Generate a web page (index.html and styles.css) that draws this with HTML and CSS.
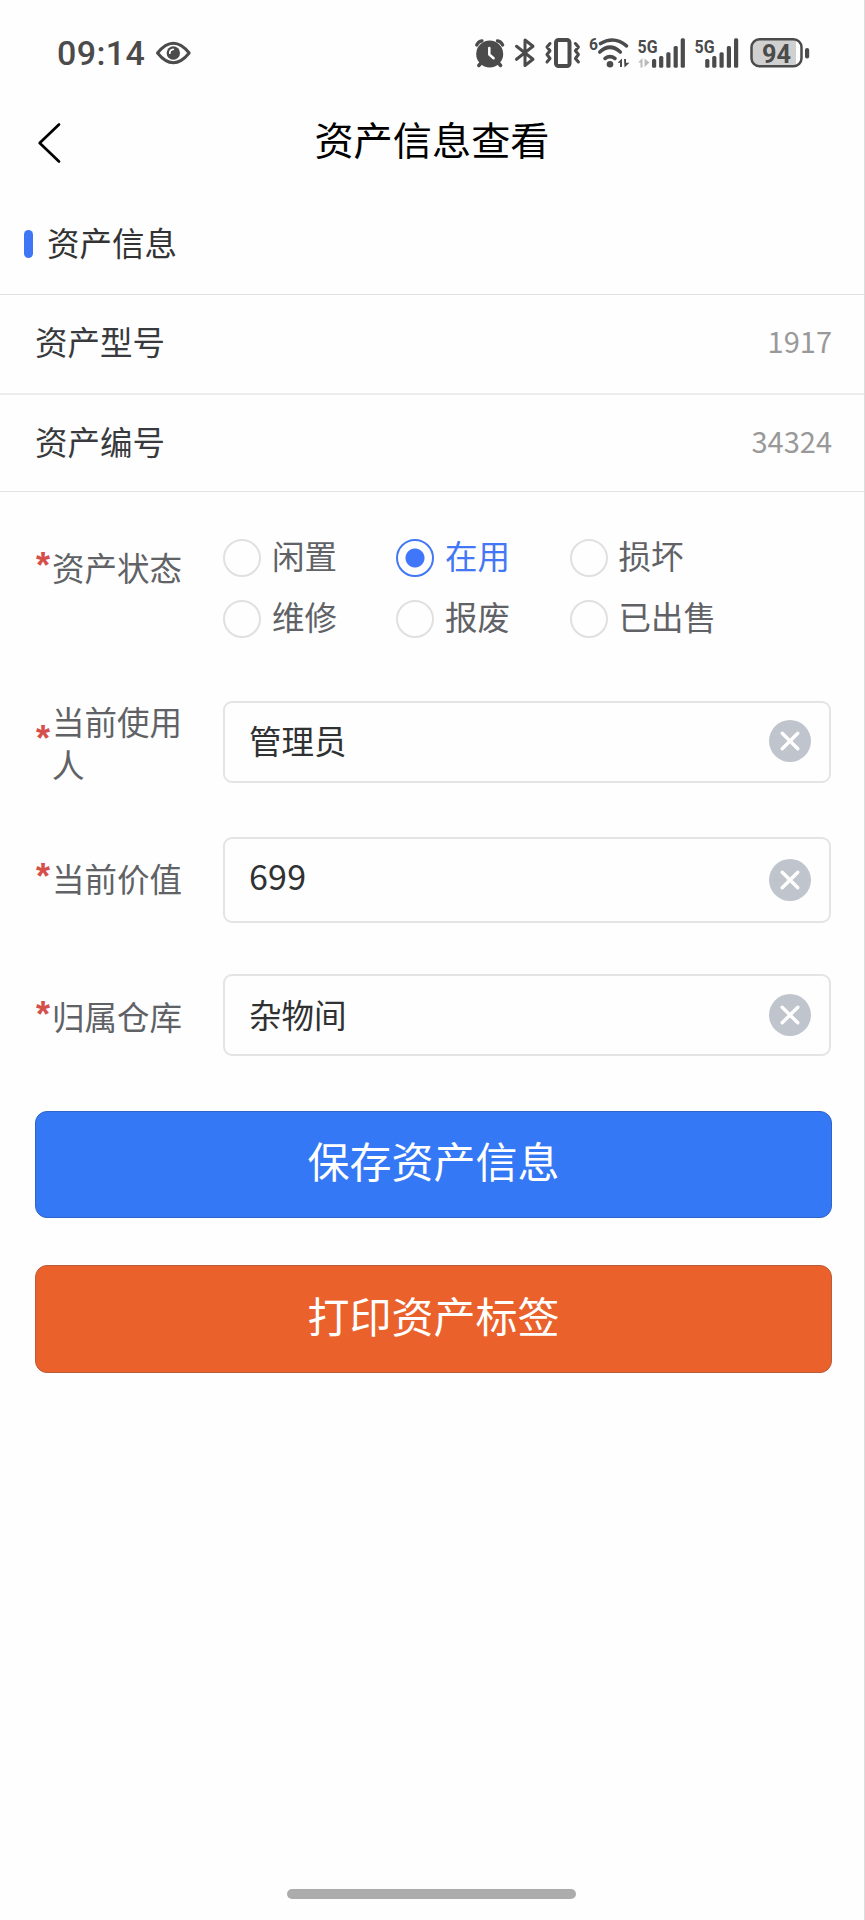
FILE: index.html
```html
<!DOCTYPE html>
<html lang="zh-CN">
<head>
<meta charset="utf-8">
<title>资产信息查看</title>
<link rel="stylesheet" href="styles.css">
</head>
<body>
<div class="screen">
  <header class="status">
    <span class="time">09:14</span>
    <svg class="eye" viewBox="155 40 37 26" width="37" height="26"><path d="M157.500 53Q173.300 33.500 189.200 53Q173.300 72.500 157.500 53Z" fill="none" stroke="#4b4b4b" stroke-width="3" stroke-linejoin="round"/><circle cx="173.300" cy="53" r="6.700" fill="#4b4b4b"/><path d="M169.800 53.200Q169.800 49.500 173.300 49.300" fill="none" stroke="#fff" stroke-width="1.700" stroke-linecap="round"/></svg>
    <div class="icons">
      <svg viewBox="470 25 40 60" width="40" height="60"><circle cx="489.700" cy="54" r="13.500" fill="#4b4b4b"/><g fill="none" stroke="#4b4b4b" stroke-linecap="round"><path d="M476.700 45Q478.300 41.300 482 40.800M502.700 45Q501.100 41.300 497.400 40.800" stroke-width="3.200"/><path d="M481.500 62.500L478.800 65.500M497.900 62.500L500.600 65.500" stroke-width="3.500"/></g><path d="M489.300 48V54.500L493.600 58.300" fill="none" stroke="#fff" stroke-width="2.500" stroke-linecap="round" stroke-linejoin="round"/></svg>
      <svg viewBox="510 25 30 60" width="30" height="60"><path d="M516.500 46.300L533 59.300L525 65.500V40L533 46.300L516.500 59.300" fill="none" stroke="#4b4b4b" stroke-width="3" stroke-linecap="round" stroke-linejoin="round"/></svg>
      <svg viewBox="540 25 45 60" width="45" height="60"><g fill="none" stroke="#4b4b4b" stroke-linecap="round" stroke-linejoin="round"><rect x="556" y="40" width="13.500" height="26" rx="2.500" stroke-width="4"/><path d="M550 43.500L547 47L550 50.700L547 54.500L550 58.500L547 62M575.400 43.500L578.400 47L575.400 50.700L578.400 54.500L575.400 58.500L578.400 62" stroke-width="3"/></g></svg>
      <svg viewBox="585 25 50 60" width="50" height="60"><text x="589" y="50" class="tag" font-size="17" textLength="9" lengthAdjust="spacingAndGlyphs">6</text><g fill="none" stroke="#4b4b4b" stroke-width="3.600" stroke-linecap="round"><path d="M600.500 43.500Q614 35.500 626.500 45.800"/><path d="M599.800 52Q610 42.500 620.300 52"/><path d="M605 58.500Q610 54.800 615 58.500"/></g><circle cx="610" cy="64.200" r="3.300" fill="#4b4b4b"/><path d="M617.500 62.800L622 58.500V67H620V62.800ZM624 59H626V62.800H629.500L624.500 67.500Z" fill="#4b4b4b"/></svg>
      <svg viewBox="635 25 55 60" width="55" height="60"><text x="637.500" y="52.500" class="tag" font-size="19" textLength="20" lengthAdjust="spacingAndGlyphs">5G</text><path d="M638 62.500L642.500 58V67.500H640.500V62.500ZM644.500 58.500L649.500 62.500L644.500 67Z" fill="#bbb"/><g fill="#4b4b4b"><rect x="652" y="59" width="4.200" height="8.700" rx="1.500"/><rect x="659.100" y="56" width="4.200" height="11.700" rx="1.500"/><rect x="666.300" y="52.300" width="4.200" height="15.400" rx="1.500"/><rect x="673.600" y="46" width="4.200" height="21.700" rx="1.500"/><rect x="680.700" y="38.300" width="4.200" height="29.400" rx="1.500"/></g></svg>
      <svg viewBox="690 25 55 60" width="55" height="60"><text x="694.500" y="52.500" class="tag" font-size="19" textLength="20" lengthAdjust="spacingAndGlyphs">5G</text><g fill="#4b4b4b"><rect x="705.200" y="59" width="4.200" height="8.700" rx="1.500"/><rect x="712.200" y="56" width="4.200" height="11.700" rx="1.500"/><rect x="719.500" y="52.300" width="4.200" height="15.400" rx="1.500"/><rect x="726.800" y="46" width="4.200" height="21.700" rx="1.500"/><rect x="734" y="38.300" width="4.200" height="29.400" rx="1.500"/></g></svg>
      <svg viewBox="745 25 70 60" width="70" height="60"><path d="M759 40H796V65.500H759Q752 65.500 752 58V47.500Q752 40 759 40Z" fill="#d0d0d0"/><rect x="751.500" y="39.300" width="50" height="27" rx="8" fill="none" stroke="#4b4b4b" stroke-width="2.500"/><rect x="805" y="48" width="4.200" height="10.500" rx="2" fill="#4b4b4b"/><text x="762" y="62.500" class="tag" font-size="26" textLength="29" lengthAdjust="spacingAndGlyphs">94</text></svg>
    </div>
  </header>

  <nav class="navbar">
    <svg class="back" viewBox="0 0 26 44" width="26" height="44"><path d="M24 3.500L4.700 22L24 40.500" fill="none" stroke="#000" stroke-width="2.700" stroke-linecap="round" stroke-linejoin="round"/></svg>
    <h1 class="title">资产信息查看</h1>
  </nav>

  <section class="section"><i class="mark"></i><h2 class="section-title">资产信息</h2></section>
  <div class="row row-model"><span>资产型号</span><span class="value">1917</span></div>
  <div class="row row-code"><span>资产编号</span><span class="value">34324</span></div>

  <form class="form">
    <div class="field field-status">
      <div class="label"><b class="star">*</b><span>资产状态</span></div>
      <div class="radios">
        <span class="radio"><i class="dot"></i><span class="radio-text">闲置</span></span>
        <span class="radio on"><i class="dot"></i><span class="radio-text">在用</span></span>
        <span class="radio"><i class="dot"></i><span class="radio-text">损坏</span></span>
        <span class="radio"><i class="dot"></i><span class="radio-text">维修</span></span>
        <span class="radio"><i class="dot"></i><span class="radio-text">报废</span></span>
        <span class="radio"><i class="dot"></i><span class="radio-text">已出售</span></span>
      </div>
    </div>
    <div class="field field-user">
      <div class="label"><b class="star">*</b><span>当前使用人</span></div>
      <div class="input"><span class="text">管理员</span><svg class="clear" viewBox="0 0 42 42" width="42" height="42"><circle cx="21" cy="21" r="21" fill="#c0c4cc"/><path d="M13.200 13.200L28.800 28.800M28.800 13.200L13.200 28.800" stroke="#fff" stroke-width="3.400" stroke-linecap="round"/></svg></div>
    </div>
    <div class="field field-price">
      <div class="label"><b class="star">*</b><span>当前价值</span></div>
      <div class="input"><span class="text num">699</span><svg class="clear" viewBox="0 0 42 42" width="42" height="42"><circle cx="21" cy="21" r="21" fill="#c0c4cc"/><path d="M13.200 13.200L28.800 28.800M28.800 13.200L13.200 28.800" stroke="#fff" stroke-width="3.400" stroke-linecap="round"/></svg></div>
    </div>
    <div class="field field-store">
      <div class="label"><b class="star">*</b><span>归属仓库</span></div>
      <div class="input"><span class="text">杂物间</span><svg class="clear" viewBox="0 0 42 42" width="42" height="42"><circle cx="21" cy="21" r="21" fill="#c0c4cc"/><path d="M13.200 13.200L28.800 28.800M28.800 13.200L13.200 28.800" stroke="#fff" stroke-width="3.400" stroke-linecap="round"/></svg></div>
    </div>
    <button type="button" class="btn save">保存资产信息</button>
    <button type="button" class="btn print">打印资产标签</button>
  </form>
  <div class="home"></div>
</div>
</body>
</html>
```
FILE: styles.css
```css
* { box-sizing: border-box; }
body { margin: 0; background: #fefefe; }
.screen {
  display: flex; flex-direction: column;
  width: 865px; height: 1920px;
  border-right: 1px solid #dcdcdc;
  background: #fefefe;
  font-family: "Noto Sans CJK SC", sans-serif;
  font-size: 32.5px; line-height: 44px; color: #383a3d;
  overflow: hidden;
}
svg { display: block; flex: none; }

.status { display: flex; align-items: center; height: 60px; margin-top: 23px; padding-left: 57px; }
.time { width: 98px; font: 500 34px/40px Roboto, sans-serif; letter-spacing: .4px; color: #4b4b4b; }
.icons { display: flex; margin: 4px 0 0 278px; }
.tag { font-family: Roboto, sans-serif; font-weight: 700; fill: #4b4b4b; }

.navbar { display: flex; align-items: center; height: 120px; padding: 0 35px; }
.title { flex: 1; margin: 0 26px 0 0; padding-bottom: 11px; text-align: center; font-size: 39.2px; font-weight: 400; line-height: 56px; color: #000; }

.section { display: flex; align-items: center; height: 92px; padding: 0 0 9px 24px; border-bottom: 1px solid #e0e0e0; }
.mark { width: 9px; height: 28px; margin-right: 14px; border-radius: 4.5px; background: #3f76f5; }
.section-title { margin: 0; padding-bottom: 5px; font-size: 32.5px; font-weight: 400; color: #333; }
.row { display: flex; align-items: center; justify-content: space-between; padding: 0 32px 4px 35px; }
.row-model { height: 100px; padding-bottom: 7px; border-bottom: 2px solid #ededed; }
.row-code { height: 97px; border-bottom: 1px solid #e3e3e3; }
.value { padding-bottom: 2px; font-size: 29px; color: #999; }

.form { display: flex; flex-direction: column; padding: 0 33px 0 35px; }
.field { display: flex; align-items: center; }
.label { display: flex; align-items: center; width: 188px; padding-right: 39px; line-height: 43px; color: #606266; }
.star { flex: none; width: 17px; padding: 0 0 2px 1px; font: 700 36px/43px "Liberation Sans", sans-serif; color: #d6504b; }
.radios { display: grid; grid-template-columns: 173px 173.5px 1fr; grid-auto-rows: 38px; row-gap: 23px; }
.radio { display: flex; align-items: center; gap: 11px; color: #606266; white-space: nowrap; }
.radio-text { padding-bottom: 7px; }
.dot { width: 38px; height: 38px; border: 2px solid #e0e0e0; border-radius: 50%; }
.on { color: #4377f5; }
.on .dot { border-color: #4377f5; background: radial-gradient(circle, #3f76fa 0 9px, transparent 10px); }
.field-status { align-items: flex-start; height: 110px; margin-top: 47px; }
.field-status .label { margin-top: 5px; }
.field-user { height: 82px; margin-top: 52px; }
.field-user .label { padding-bottom: 1px; }
.field-user .star { padding-bottom: 7px; }
.field-price { height: 86px; margin-top: 54px; }
.field-price .label { padding-bottom: 6px; }
.field-store { height: 82px; margin-top: 51px; }
.input { display: flex; align-items: center; justify-content: space-between; flex: 1; height: 100%; padding: 0 18px 0 24px; border: 2px solid #e4e4e4; border-radius: 9px; color: #303133; }
.field-user .input { padding-bottom: 2px; }
.text { padding-bottom: 2px; }
.num { padding-bottom: 9px; font-size: 34px; letter-spacing: .2px; }
.btn { width: 797px; height: 107px; margin: 55px 0 0; padding: 0 0 9px; border: 1px solid; border-radius: 12px; font: 400 42px/60px "Noto Sans CJK SC", sans-serif; color: #fff; }
.save { background: #3478f6; border-color: #3064c8; }
.print { height: 108px; margin-top: 47px; background: #ea612b; border-color: #b95c38; }
.home { width: 289px; height: 10px; margin: auto auto 21px 287px; border-radius: 5px; background: #acacac; }
```
